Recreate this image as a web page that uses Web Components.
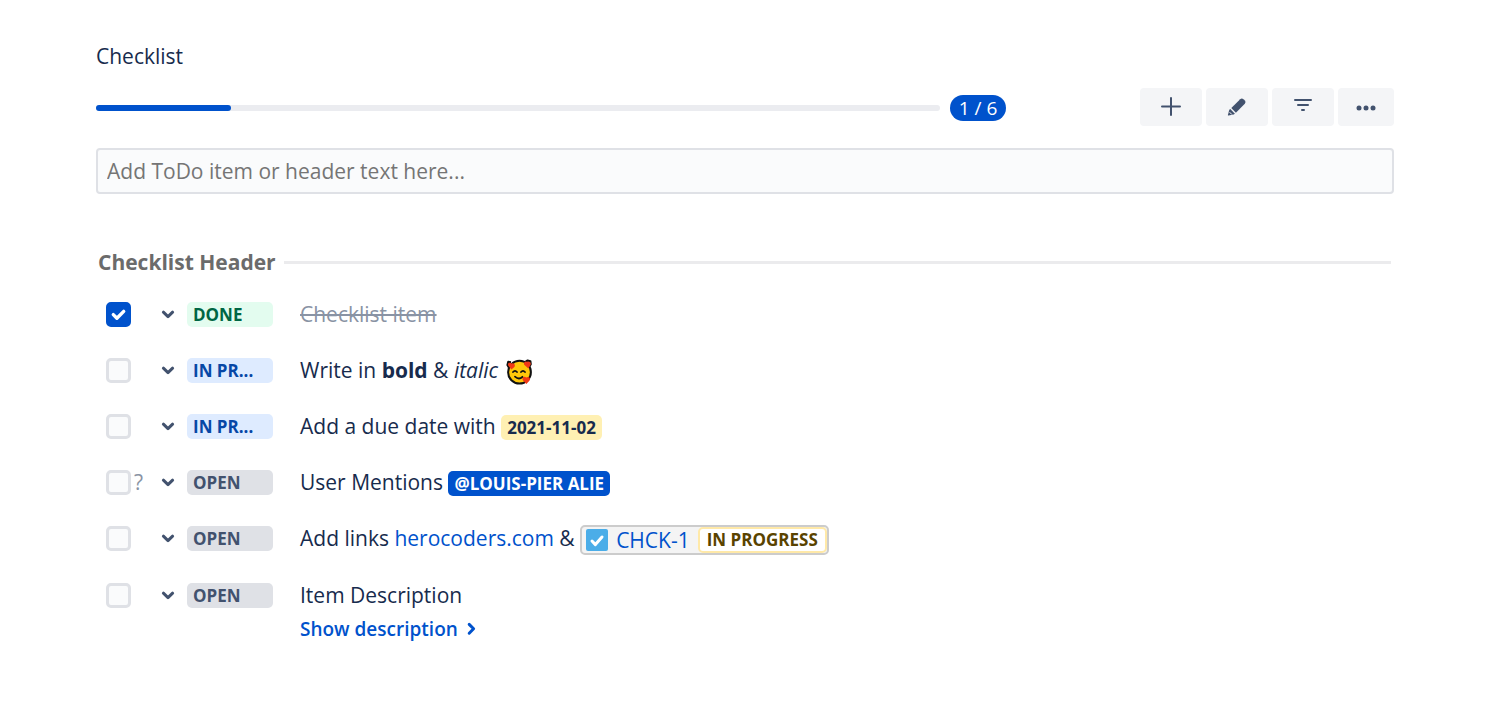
<!DOCTYPE html>
<html lang="en">
<head>
<meta charset="utf-8">
<meta name="viewport" content="width=device-width, initial-scale=1">
<title>Checklist</title>
<style>
  body {
    margin: 0;
    background: #fff;
    color: #172b4d;
    font-family: "Open Sans", "Noto Sans", sans-serif;
    font-size: 21px;
    line-height: 32px;
  }
</style>
</head>
<body>
<checklist-panel heading="Checklist">
  <checklist-progress slot="progress" done="1" total="6" percent="16"></checklist-progress>
  <icon-button slot="tools" icon="add" label="Add item"></icon-button>
  <icon-button slot="tools" icon="edit" label="Edit checklist"></icon-button>
  <icon-button slot="tools" icon="filter" label="Filter items"></icon-button>
  <icon-button slot="tools" icon="more" label="More actions" compact></icon-button>
  <checklist-field placeholder="Add ToDo item or header text here..."></checklist-field>
  <checklist-group heading="Checklist Header">
    <checklist-item status="done" checked>Checklist item</checklist-item>
    <checklist-item status="progress">Write in <b>bold</b> &amp; <i>italic</i> <love-emoji></love-emoji></checklist-item>
    <checklist-item status="progress">Add a due date with <text-tag kind="date">2021-11-02</text-tag></checklist-item>
    <checklist-item status="open" optional>User Mentions <text-tag kind="mention">@LOUIS-PIER ALIE</text-tag></checklist-item>
    <checklist-item status="open">Add links <text-link href="#herocoders">herocoders.com</text-link> &amp; <issue-link key="CHCK-1" status="IN PROGRESS"></issue-link></checklist-item>
    <checklist-item status="open">Item Description<description-toggle slot="details">Show description</description-toggle></checklist-item>
  </checklist-group>
</checklist-panel>

<script>
class ChecklistPanel extends HTMLElement {
  constructor() {
    super();
    this.attachShadow({ mode: 'open' });
  }

  connectedCallback() {
    this.shadowRoot.innerHTML = `
      <style>
        :host {
          display: block;
          padding: 40px 92px 40px 96px;
        }
        h1 {
          margin: 0;
          font-size: 21px;
          font-weight: 500;
          line-height: 32px;
        }
        .toolbar {
          display: flex;
          align-items: center;
          gap: 134px;
          margin: 16px 0 22px;
        }
        slot[name="progress"] {
          display: block;
          flex: 1;
          min-width: 0;
        }
        .tools {
          display: flex;
          gap: 4px;
        }
      </style>
      <h1>${this.getAttribute('heading')}</h1>
      <div class="toolbar">
        <slot name="progress"></slot>
        <div class="tools"><slot name="tools"></slot></div>
      </div>
      <slot></slot>
    `;
  }
}

class ChecklistProgress extends HTMLElement {
  constructor() {
    super();
    this.attachShadow({ mode: 'open' });
  }

  connectedCallback() {
    this.shadowRoot.innerHTML = `
      <style>
        :host {
          display: flex;
          align-items: center;
          gap: 10px;
          padding-top: 2px;
        }
        progress {
          appearance: none;
          flex: 1;
          min-width: 0;
          height: 6px;
          border: 0;
        }
        progress::-webkit-progress-bar {
          background: #ebecf0;
          border-radius: 3px;
        }
        progress::-webkit-progress-value {
          background: #0052cc;
          border-radius: 3px;
        }
        .count {
          box-sizing: border-box;
          min-width: 56px;
          padding: 0 8px;
          border-radius: 13px;
          background: #0052cc;
          color: #fff;
          font-size: 19px;
          line-height: 26px;
          text-align: center;
        }
      </style>
      <progress aria-label="Completed items" max="100" value="${this.getAttribute('percent')}"></progress>
      <span class="count">${this.getAttribute('done')} / ${this.getAttribute('total')}</span>
    `;
  }
}

const ICONS = {
  add: '<path d="M14 5v17M5 13.5h18" fill="none" stroke="currentColor" stroke-width="2" stroke-linecap="round"/>',
  edit: `<path d="M8.3 15.1 17.2 6.2q1.6-1.4 3.2 0l1.4 1.4q1.5 1.6 0 3.2l-8.9 8.9z" fill="currentColor"/>
         <path d="m7.3 16.1 4.6 4.6-1.2.8-5.2 1.1q-.7 0-.6-.7l1.4-5.1z" fill="currentColor"/>
         <path d="m6.6 19.2 2.3 2.3" stroke="#f4f5f7" stroke-width="1"/>`,
  filter: '<path d="M6 7h16M9 12h10M13 17h2" fill="none" stroke="currentColor" stroke-width="2" stroke-linecap="round"/>',
  more: '<g fill="currentColor"><circle cx="7" cy="15" r="2.5"/><circle cx="14" cy="15" r="2.5"/><circle cx="21" cy="15" r="2.5"/></g>'
};

class IconButton extends HTMLElement {
  constructor() {
    super();
    this.attachShadow({ mode: 'open' });
  }

  connectedCallback() {
    this.shadowRoot.innerHTML = `
      <style>
        :host {
          display: block;
        }
        button {
          display: flex;
          align-items: center;
          justify-content: center;
          width: 62px;
          height: 38px;
          padding: 0;
          border: 0;
          border-radius: 4px;
          background: #f4f5f7;
          color: #42526e;
          cursor: pointer;
        }
        :host([compact]) button {
          width: 56px;
        }
        button:hover {
          background: #ebecf0;
        }
      </style>
      <button type="button" aria-label="${this.getAttribute('label')}">
        <svg width="28" height="28" viewBox="0 0 28 28">${ICONS[this.getAttribute('icon')]}</svg>
      </button>
    `;
  }
}

class ChecklistField extends HTMLElement {
  constructor() {
    super();
    this.attachShadow({ mode: 'open' });
  }

  connectedCallback() {
    const text = this.getAttribute('placeholder');
    this.shadowRoot.innerHTML = `
      <style>
        :host {
          display: block;
        }
        input {
          box-sizing: border-box;
          display: block;
          width: 100%;
          height: 46px;
          padding: 0 9px;
          border: 2px solid #dfe1e6;
          border-radius: 4px;
          background: #fafbfc;
          color: inherit;
          font: inherit;
        }
        input::placeholder {
          color: #757575;
          opacity: 1;
        }
      </style>
      <input type="text" aria-label="${text}" placeholder="${text}">
    `;
  }
}

class ChecklistGroup extends HTMLElement {
  constructor() {
    super();
    this.attachShadow({ mode: 'open' });
  }

  connectedCallback() {
    this.shadowRoot.innerHTML = `
      <style>
        :host {
          display: block;
          margin-top: 52px;
        }
        .header {
          display: flex;
          align-items: center;
          gap: 8px;
          padding: 0 3px 0 2px;
        }
        h2 {
          margin: 0;
          color: #6b6b6b;
          font-size: 21px;
          font-weight: 700;
          line-height: 32px;
        }
        .line {
          flex: 1;
          height: 3px;
          background: #ebebed;
        }
        .items {
          margin-top: 8px;
        }
      </style>
      <div class="header">
        <h2>${this.getAttribute('heading')}</h2>
        <div class="line"></div>
      </div>
      <div class="items"><slot></slot></div>
    `;
  }
}

const STATUSES = { open: 'OPEN', progress: 'IN PR...', done: 'DONE' };

class ChecklistItem extends HTMLElement {
  constructor() {
    super();
    this.attachShadow({ mode: 'open' });
  }

  connectedCallback() {
    const status = this.getAttribute('status');
    this.shadowRoot.innerHTML = `
      <style>
        :host {
          display: grid;
          grid-template-columns: 54px 113px minmax(0, 1fr);
          padding: 12px 0 12px 10px;
        }
        .tick, .status {
          display: flex;
          align-items: center;
          height: 32px;
        }
        .box {
          display: grid;
        }
        .box > * {
          grid-area: 1 / 1;
        }
        input {
          appearance: none;
          box-sizing: border-box;
          width: 25px;
          height: 25px;
          margin: 0;
          border: 3px solid #dfe1e6;
          border-radius: 5px;
          background: #fafbfc;
        }
        input:checked {
          border-color: #0052cc;
          background: #0052cc;
        }
        .box svg {
          visibility: hidden;
          pointer-events: none;
        }
        input:checked + svg {
          visibility: visible;
        }
        .optional {
          margin-left: 3px;
          color: #8993a4;
        }
        .status {
          gap: 11px;
        }
        .status svg {
          flex: none;
        }
        select {
          appearance: none;
          width: 86px;
          height: 25px;
          padding: 0 6px;
          border: 0;
          border-radius: 5px;
          font: inherit;
          font-size: 17px;
          font-weight: 700;
          line-height: 25px;
        }
        .open { background: #dfe1e6; color: #42526e; }
        .progress { background: #deebff; color: #0747a6; }
        .done { background: #e3fcef; color: #006644; }
        .text {
          padding-left: 27px;
        }
        :host([checked]) .text {
          color: #8993a4;
          text-decoration: line-through;
        }
      </style>
      <div class="tick">
        <span class="box">
          <input type="checkbox" aria-label="Done" ${this.hasAttribute('checked') ? 'checked' : ''}>
          <svg width="25" height="25" viewBox="0 0 25 25"><path d="m7.3 12.6 3.6 3.6 6.8-6.8" fill="none" stroke="#fff" stroke-width="3.4" stroke-linecap="round" stroke-linejoin="round"/></svg>
        </span>
        ${this.hasAttribute('optional') ? '<span class="optional">?</span>' : ''}
      </div>
      <label class="status">
        <svg width="16" height="16" viewBox="0 0 16 16"><path d="m3.4 6.2 4.6 4.4 4.6-4.4" fill="none" stroke="#42526e" stroke-width="3" stroke-linecap="round" stroke-linejoin="round"/></svg>
        <select class="${status}" aria-label="Status">
          ${Object.entries(STATUSES).map(([id, name]) => `<option ${id === status ? 'selected' : ''}>${name}</option>`).join('')}
        </select>
      </label>
      <div class="text"><slot></slot><slot name="details"></slot></div>
    `;
  }
}

class TextTag extends HTMLElement {
  constructor() {
    super();
    this.attachShadow({ mode: 'open' });
  }

  connectedCallback() {
    this.shadowRoot.innerHTML = `
      <style>
        :host {
          display: inline-block;
          padding: 0 6px;
          border-radius: 5px;
          font-size: 17px;
          font-weight: 700;
          line-height: 25px;
        }
        :host([kind="date"]) { background: #fff0b3; }
        :host([kind="mention"]) { background: #0052cc; color: #fff; }
      </style>
      <slot></slot>
    `;
  }
}

class TextLink extends HTMLElement {
  constructor() {
    super();
    this.attachShadow({ mode: 'open' });
  }

  connectedCallback() {
    this.shadowRoot.innerHTML = `
      <style>
        :host { display: inline; }
        a { color: #0052cc; text-decoration: none; }
        a:hover { text-decoration: underline; }
      </style>
      <a href="${this.getAttribute('href')}"><slot></slot></a>
    `;
  }
}

class IssueLink extends HTMLElement {
  constructor() {
    super();
    this.attachShadow({ mode: 'open' });
  }

  connectedCallback() {
    const key = this.getAttribute('key');
    this.shadowRoot.innerHTML = `
      <style>
        :host {
          display: inline-block;
          vertical-align: middle;
        }
        a {
          display: flex;
          align-items: center;
          box-sizing: border-box;
          height: 30px;
          padding-left: 4px;
          border: 2px solid #ccc;
          border-radius: 5px;
          background: #f4f4f4;
          color: #0052cc;
          text-decoration: none;
        }
        .key {
          margin: 0 8px;
        }
        .status {
          padding: 0 7px;
          border: 2px solid #ffe9a8;
          border-radius: 5px;
          background: #fff;
          color: #594300;
          font-size: 17px;
          font-weight: 700;
          line-height: 22px;
        }
      </style>
      <a href="#${key}">
        <svg width="22" height="22" viewBox="0 0 22 22"><rect width="22" height="22" rx="2" fill="#4bade8"/><path d="m6 12 3.4 3.6L16 8" fill="none" stroke="#fff" stroke-width="3" stroke-linecap="round" stroke-linejoin="round"/></svg>
        <span class="key">${key}</span>
        <span class="status">${this.getAttribute('status')}</span>
      </a>
    `;
  }
}

class DescriptionToggle extends HTMLElement {
  constructor() {
    super();
    this.attachShadow({ mode: 'open' });
  }

  connectedCallback() {
    this.shadowRoot.innerHTML = `
      <style>
        :host {
          display: block;
          margin-top: 2px;
        }
        button {
          display: flex;
          align-items: center;
          gap: 6px;
          padding: 0;
          border: 0;
          background: none;
          color: #0052cc;
          font: inherit;
          font-size: 19px;
          font-weight: 600;
          line-height: 32px;
          cursor: pointer;
        }
      </style>
      <button type="button" aria-expanded="false">
        <slot></slot>
        <svg width="16" height="16" viewBox="0 0 16 16"><path d="m5.2 3.4 4.4 4.4-4.4 4.4" fill="none" stroke="currentColor" stroke-width="3" stroke-linecap="round" stroke-linejoin="round"/></svg>
      </button>
    `;
  }
}

// Smiling face with three hearts
class LoveEmoji extends HTMLElement {
  constructor() {
    super();
    this.attachShadow({ mode: 'open' });
  }

  connectedCallback() {
    this.shadowRoot.innerHTML = `
      <style>
        :host {
          display: inline-block;
          margin-left: 2px;
          vertical-align: middle;
          line-height: 0;
        }
      </style>
      <svg width="27" height="27" viewBox="0 0 27 27" role="img" aria-label="Smiling face with hearts">
        <circle cx="13.5" cy="13.2" r="11.4" fill="#ffc80a" stroke="#111" stroke-width="2"/>
        <g stroke="#111" stroke-width="2" stroke-linejoin="round">
          <path d="M5 3.2 2.2 2.8 1.4 6l2 3.4M19 3l2.6-1.6 2.8.8.4 3-2 3.4" fill="#f03a17"/>
        </g>
        <g fill="#f03a17">
          <path d="M5.4 10.6 2.2 6.4C1.2 3.8 4 2.8 5.4 4.6 7.8 3.4 9.8 5.8 8.4 8z"/>
          <path d="m22.4 9.4-4.2-3.6C17 3.4 19.6 1.4 21.4 3.2c2.2-1.6 4.4.6 3 3z"/>
          <path d="m20.4 25-3.6-3.8c-1.4-2.6 1.6-4.6 3.4-2.6 2.2-1.8 4.8.4 3.4 3z"/>
        </g>
        <g fill="none" stroke="#111" stroke-width="1.8" stroke-linecap="round">
          <path d="M7 13q2-2.4 4 0M15 13q2-2.4 4 0M9 17.6q4 3.6 7.4.2"/>
        </g>
      </svg>
    `;
  }
}

customElements.define('checklist-panel', ChecklistPanel);
customElements.define('checklist-progress', ChecklistProgress);
customElements.define('icon-button', IconButton);
customElements.define('checklist-field', ChecklistField);
customElements.define('checklist-group', ChecklistGroup);
customElements.define('checklist-item', ChecklistItem);
customElements.define('text-tag', TextTag);
customElements.define('text-link', TextLink);
customElements.define('issue-link', IssueLink);
customElements.define('description-toggle', DescriptionToggle);
customElements.define('love-emoji', LoveEmoji);
</script>
</body>
</html>
